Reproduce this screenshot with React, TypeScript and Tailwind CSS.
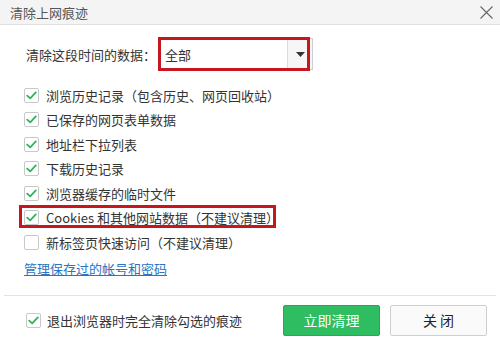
import React from "react";

const Check = ({ checked }: { checked: boolean }) => (
  <div className="w-[15px] h-[15px] border border-[#c8c8c8] rounded-[2px] bg-white flex items-center justify-center shrink-0">
    {checked && (
      <svg width="11" height="9" viewBox="0 0 11 9">
        <path d="M1.2 4.6 L4.2 7.4 L9.8 1.4" fill="none" stroke="#2fb45e" strokeWidth="1.8" strokeLinecap="round" strokeLinejoin="round" />
      </svg>
    )}
  </div>
);

const rows: { label: string; checked: boolean; mark?: boolean }[] = [
  { label: "浏览历史记录（包含历史、网页回收站）", checked: true },
  { label: "已保存的网页表单数据", checked: true },
  { label: "地址栏下拉列表", checked: true },
  { label: "下载历史记录", checked: true },
  { label: "浏览器缓存的临时文件", checked: true },
  { label: "Cookies 和其他网站数据（不建议清理）", checked: true, mark: true },
  { label: "新标签页快速访问（不建议清理）", checked: false },
];

export default function App() {
  return (
    <div
      className="w-[500px] h-[348px] bg-white relative overflow-hidden text-[#333] text-[13px]"
      style={{ fontFamily: '"Noto Sans CJK SC", "Noto Sans", sans-serif' }}
    >
      <div className="h-[25px] flex items-center justify-between pl-[10px] pr-[7px] bg-[#f4f4f4] border-b border-[#e1e1e1]">
        <span className="text-[#555] text-[13px] leading-none">清除上网痕迹</span>
        <svg width="13" height="13" viewBox="0 0 13 13">
          <path d="M0.5 0.5 L12.5 12.5 M12.5 0.5 L0.5 12.5" stroke="#666" strokeWidth="1.1" />
        </svg>
      </div>

      <div className="pl-[24px]">
        <div className="mt-[12px] h-[34px] flex items-center">
          <span className="w-[136px] pl-[2px] leading-none">清除这段时间的数据：</span>
          <div className="relative w-[153px] h-[32px] border border-[#cdcdcd] flex bg-white">
            <div className="flex-1 flex items-center pl-[4px] leading-none">全部</div>
            <div className="w-[25px] border-l border-[#dcdcdc] bg-[#f6f6f6] flex items-center justify-center">
              <svg width="9" height="5" viewBox="0 0 9 5">
                <path d="M0 0 L9 0 L4.5 5 Z" fill="#333" />
              </svg>
            </div>
            <div className="absolute -left-[3px] -top-[2px] w-[152px] h-[34px] border-[3px] border-[#c7171e]" />
          </div>
        </div>

        <div className="mt-[12px] flex flex-col">
          {rows.map((r) => (
            <div key={r.label} className="relative h-[24.5px] flex items-center gap-[7px]">
              <Check checked={r.checked} />
              <span className="leading-none">{r.label}</span>
              {r.mark && (
                <div className="absolute -left-[5px] top-[-1px] w-[257px] h-[23px] border-[3px] border-[#c7171e]" />
              )}
            </div>
          ))}
        </div>

        <div className="mt-[2px] h-[24px] flex items-center">
          <span className="underline text-[#2b74c2] leading-none">管理保存过的帐号和密码</span>
        </div>
      </div>

      <div className="mt-[14px] mx-[4px] h-px bg-[#e3e3e3]" />

      <div className="pt-[9px] pl-[26px] pr-[13px] flex items-center">
        <Check checked={true} />
        <span className="ml-[6px] leading-none">退出浏览器时完全清除勾选的痕迹</span>
        <div className="ml-auto flex gap-[10px]">
          <div className="w-[97px] h-[31px] rounded-[2px] bg-[#2fbd62] border border-[#26a854] flex items-center justify-center text-white text-[14px] leading-none">
            立即清理
          </div>
          <div className="w-[97px] h-[31px] rounded-[2px] bg-[#fafafa] border border-[#cfcfcf] flex items-center justify-center text-[#222] text-[14px] leading-none">
            关 闭
          </div>
        </div>
      </div>
    </div>
  );
}
